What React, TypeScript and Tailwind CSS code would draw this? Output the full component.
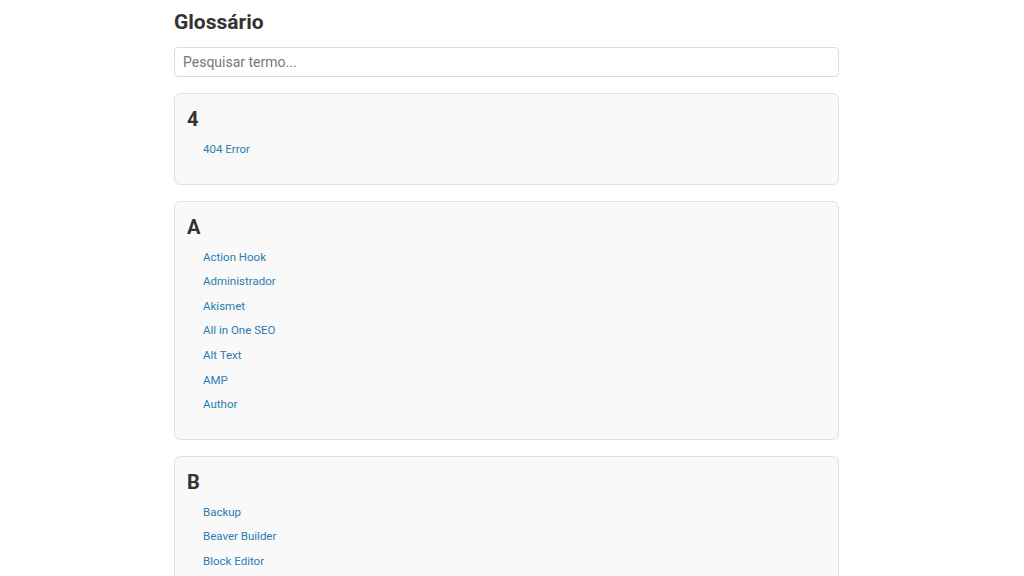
import React from "react";

const groups: { letter: string; items: string[] }[] = [
  { letter: "4", items: ["404 Error"] },
  {
    letter: "A",
    items: ["Action Hook", "Administrador", "Akismet", "All in One SEO", "Alt Text", "AMP", "Author"],
  },
  { letter: "B", items: ["Backup", "Beaver Builder", "Block Editor"] },
];

export default function App() {
  return (
    <div className="min-h-screen bg-white" style={{ fontFamily: "Roboto, 'Liberation Sans', sans-serif" }}>
      <div className="w-[665px] ml-[174px] pt-[9px]">
        <h1 className="text-[21px] leading-[26px] font-bold text-[#333]">Glossário</h1>
        <input
          type="text"
          placeholder="Pesquisar termo..."
          className="mt-[12px] w-full h-[30px] border border-[#dcdcdc] rounded-[4px] px-[8px] text-[14px] text-[#333] placeholder:text-[#777] outline-none bg-white"
        />
        <div className="mt-[16px] flex flex-col gap-[16px]">
          {groups.map((g) => (
            <div key={g.letter} className="bg-[#f9f9f9] border border-[#e2e2e2] rounded-[6px] px-[12px] pt-[12px] pb-[22px]">
              <h3 className="text-[20px] leading-[26px] font-bold text-[#333]">{g.letter}</h3>
              <ul className="mt-[5px] pl-[16px]">
                {g.items.map((it) => (
                  <li key={it} className="h-[24.6px] leading-[24.6px] text-[11.5px]">
                    <a href="#" className="text-[#2b7db0]">
                      {it}
                    </a>
                  </li>
                ))}
              </ul>
            </div>
          ))}
        </div>
      </div>
    </div>
  );
}
